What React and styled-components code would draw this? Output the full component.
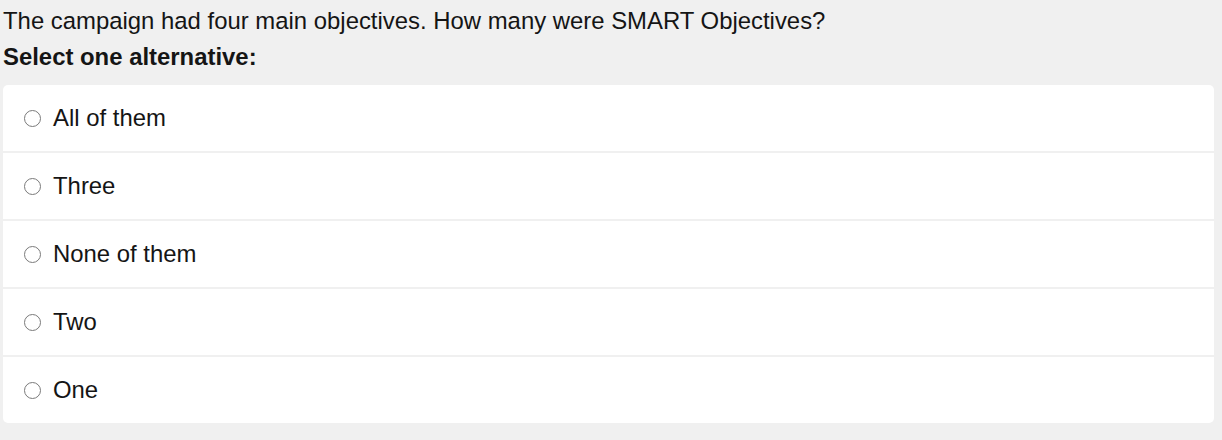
import styled, { createGlobalStyle } from 'styled-components'

const GlobalStyle = createGlobalStyle`
  html, body {
    margin: 0;
    background: #f0f0f0;
  }
  body {
    font-family: "Liberation Sans", Arial, sans-serif;
    color: #151515;
  }
`

const Page = styled.div`
  padding: 3px 8px 18px 3px;
`

const Question = styled.p`
  margin: 0;
  font-size: 23.9px;
  line-height: 36px;
`

const Prompt = styled.p`
  margin: 0;
  font-size: 23.9px;
  line-height: 36px;
  font-weight: bold;
`

const Options = styled.div`
  margin-top: 10px;
  background: #fff;
  border-radius: 5px;
  overflow: hidden;
  display: flex;
  flex-direction: column;
`

const Option = styled.label`
  display: flex;
  align-items: center;
  height: 66px;
  padding-left: 21px;
  font-size: 23.9px;
  cursor: pointer;
  & + & {
    border-top: 2px solid #f0f0f0;
  }
`

const Radio = styled.input.attrs({ type: 'radio' })`
  appearance: none;
  -webkit-appearance: none;
  display: block;
  margin: 1px 12px 0 0;
  padding: 0;
  width: 17px;
  height: 17px;
  min-width: 17px;
  border: 1.5px solid #7a7a7a;
  border-radius: 50%;
  background: #fff;
  box-sizing: border-box;
  flex-shrink: 0;
  &:checked {
    border: 5px solid #1a73e8;
  }
`

const choices = ['All of them', 'Three', 'None of them', 'Two', 'One']

export default function App() {
  return (
    <Page>
      <GlobalStyle />
      <Question>The campaign had four main objectives. How many were SMART Objectives?</Question>
      <Prompt>Select one alternative:</Prompt>
      <Options>
        {choices.map((c) => (
          <Option key={c}>
            <Radio name="answer" value={c} />
            {c}
          </Option>
        ))}
      </Options>
    </Page>
  )
}
